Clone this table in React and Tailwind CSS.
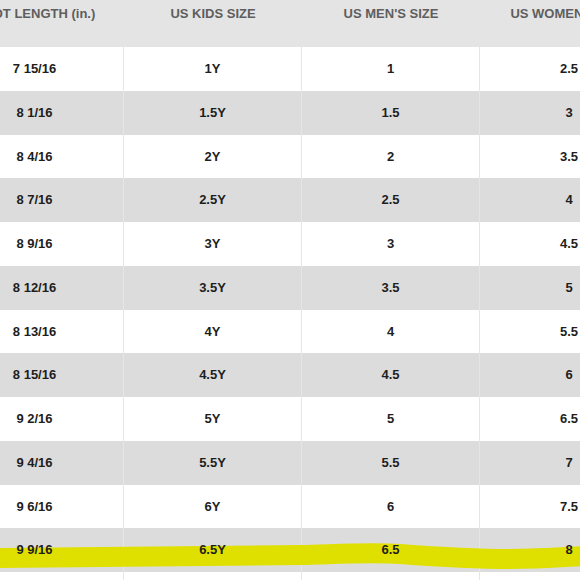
import React from "react";

const rows = [
  ["7 15/16", "1Y", "1", "2.5"],
  ["8 1/16", "1.5Y", "1.5", "3"],
  ["8 4/16", "2Y", "2", "3.5"],
  ["8 7/16", "2.5Y", "2.5", "4"],
  ["8 9/16", "3Y", "3", "4.5"],
  ["8 12/16", "3.5Y", "3.5", "5"],
  ["8 13/16", "4Y", "4", "5.5"],
  ["8 15/16", "4.5Y", "4.5", "6"],
  ["9 2/16", "5Y", "5", "6.5"],
  ["9 4/16", "5.5Y", "5.5", "7"],
  ["9 6/16", "6Y", "6", "7.5"],
  ["9 9/16", "6.5Y", "6.5", "8"],
  ["", "", "", ""],
];

const headers = ["FOOT LENGTH (in.)", "US KIDS SIZE", "US MEN'S SIZE", "US WOMEN'S SIZE"];

export default function App() {
  return (
    <div
      className="relative w-[580px] h-[580px] overflow-hidden bg-white"
      style={{ fontFamily: '"Liberation Sans", Arial, sans-serif' }}
    >
      <div className="ml-[-54px] w-[712px]">
        <div className="grid grid-cols-4 h-[47px] bg-[#e4e4e4]">
          {headers.map((h) => (
            <div
              key={h}
              className="text-center text-[13px] font-bold text-[#5e5e5e] pt-[4px] whitespace-nowrap"
            >
              {h}
            </div>
          ))}
        </div>
        {rows.map((r, i) => (
          <div
            key={i}
            className={`grid grid-cols-4 h-[43.75px] ${i % 2 === 1 ? "bg-[#dcdcdc]" : "bg-white"}`}
          >
            {r.map((c, j) => (
              <div
                key={j}
                className={`flex items-center justify-center text-[13px] font-bold text-[#1e1e1e] ${j < 3 ? "border-r border-[#e6e6e6]" : ""}`}
              >
                <span className="relative z-10">{c}</span>
              </div>
            ))}
          </div>
        ))}
      </div>
      <svg
        className="absolute left-0 top-0 pointer-events-none z-0"
        width="580"
        height="580"
        viewBox="0 0 580 580"
      >
        <path
          d="M -5 558 C 100 557, 200 556, 300 555 C 340 554, 370 552, 400 554 C 440 557, 470 559, 510 559 C 540 559, 565 557, 585 556"
          stroke="#e0e000"
          strokeWidth="20"
          fill="none"
        />
      </svg>
    </div>
  );
}
